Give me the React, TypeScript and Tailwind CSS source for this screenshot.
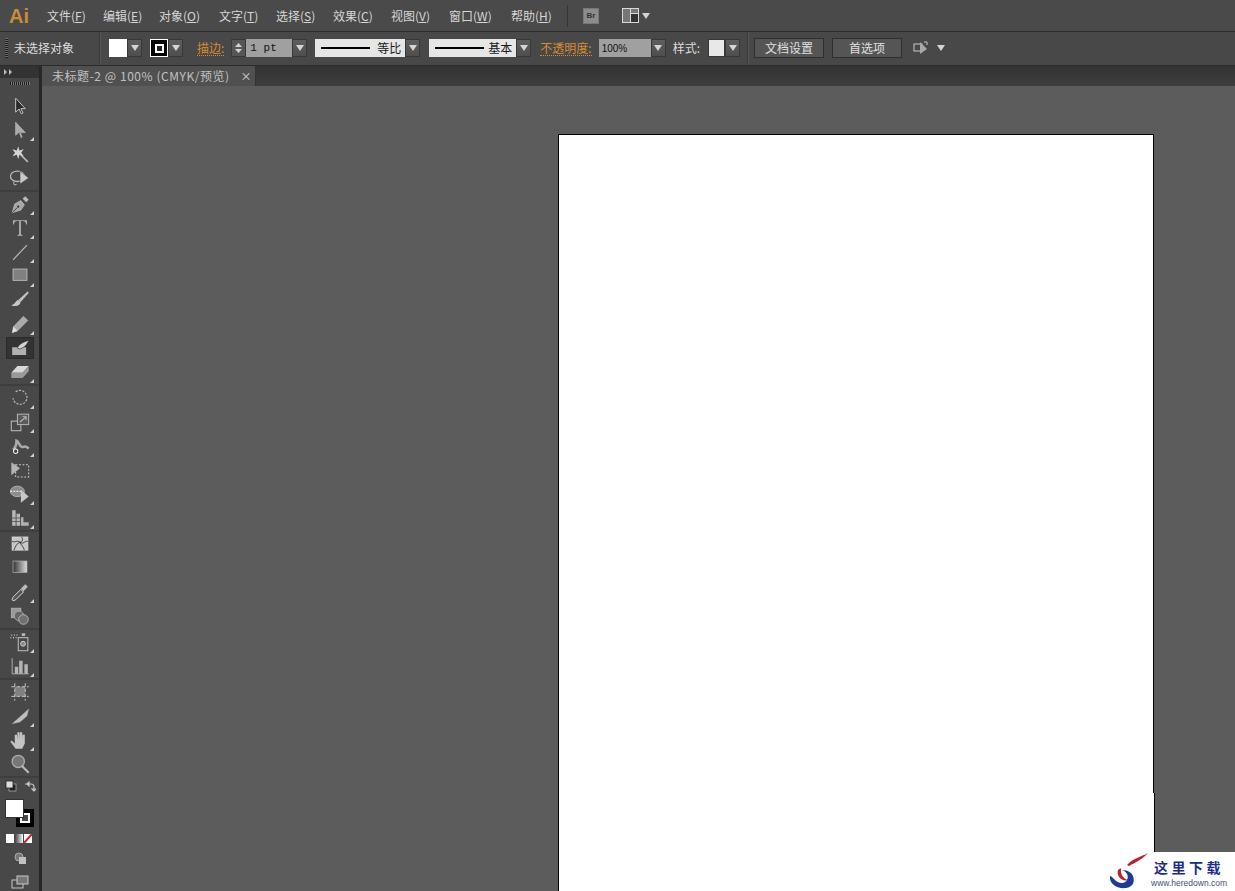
import React from "react";

const FONT = "font-['Noto_Sans_CJK_SC','Liberation_Sans',sans-serif]";

const menus = [
  { label: "文件", key: "F", w: "w-[56px]" },
  { label: "编辑", key: "E", w: "w-[56px]" },
  { label: "对象", key: "O", w: "w-[60px]" },
  { label: "文字", key: "T", w: "w-[57px]" },
  { label: "选择", key: "S", w: "w-[57px]" },
  { label: "效果", key: "C", w: "w-[58px]" },
  { label: "视图", key: "V", w: "w-[58px]" },
  { label: "窗口", key: "W", w: "w-[62px]" },
  { label: "帮助", key: "H", w: "w-[56px]" },
];

const Caret = () => (
  <svg width="8" height="6" viewBox="0 0 8 6">
    <path d="M0 0h8L4 6z" fill="#d4d4d4" />
  </svg>
);

const Drop = ({ className = "w-[15px]" }: { className?: string }) => (
  <div className={`flex h-[18px] items-center justify-center border border-[#383838] bg-gradient-to-b from-[#5e5e5e] to-[#4e4e4e] ${className}`}>
    <Caret />
  </div>
);

const Divider = ({ className = "" }: { className?: string }) => (
  <div className={`h-[32px] w-[2px] border-l border-[#3a3a3a] border-r-[#565656] border-r ${className}`} />
);

const LineBox = ({ label, width }: { label: string; width: string }) => (
  <div className={`flex h-[18px] items-center justify-between bg-[#e6e6e6] pl-[6px] pr-[4px] text-[12px] text-[#1a1a1a] ${width}`}>
    <div className="h-[2px] w-[49px] bg-black" />
    <span>{label}</span>
  </div>
);

// every tool icon sits in a 24 box, stroked the way the AI panel does
const s = { fill: "none", stroke: "#b9b9b9", strokeWidth: 1.2 };
const g = { fill: "#a8a8a8", stroke: "#c4c4c4", strokeWidth: 0.8 };

const toolIcons: Record<string, React.ReactNode> = {
  select: <path d="M7 3v16l4-3.500 2.500 5.500 2-1-2.500-5h5z" fill="#2a2a2a" stroke="#c8c8c8" strokeWidth="1.100" />,
  direct: (
    <g>
      <path d="M7 3v15l4-3.500 7 .5z" fill="#aaa" stroke="#bbb" strokeWidth="0.800" />
      <path d="M12 15l2 6" stroke="#aaa" strokeWidth="2" />
    </g>
  ),
  wand: (
    <g>
      <path d="M13 13l8 8" stroke="#bbb" strokeWidth="1.800" />
      <path d="M10 3l1.300 5 5-1.500-3 4 3 4-5-1.500-1.300 5-1.700-5-5 1.500 3-4-3-4 5 1.500z" fill="#d4d4d4" />
    </g>
  ),
  lasso: (
    <g>
      <ellipse cx="9" cy="10" rx="8" ry="6" fill="none" stroke="#b9b9b9" strokeWidth="1.500" />
      <path d="M5 16c-1 3 1 5 3 3" {...s} />
      <path d="M12 4v15l10-7z" fill="#c8c8c8" stroke="#3a3a3a" strokeWidth="0.600" />
    </g>
  ),
  pen: (
    <g>
      <path d="M3 22l3-10 7-4 4 5-4 6z" {...g} />
      <path d="M3 22l6-6" stroke="#333" strokeWidth="1" />
      <circle cx="10" cy="15" r="1.300" fill="#333" />
      <path d="M15 6l3-3 4 4-3 3z" fill="#bbb" />
    </g>
  ),
  type: <path d="M4 3h16v5h-1c0-2-1-4-4-4h-2v15c0 1 1 1 2 1v1H9v-1c1 0 2 0 2-1V4H9C6 4 5 6 5 8H4z" fill="#b4b4b4" />,
  line: <path d="M4 21L20 4" stroke="#bdbdbd" strokeWidth="1.300" />,
  rect: <rect x="4" y="4" width="16" height="13" fill="#808080" stroke="#bdbdbd" strokeWidth="1" />,
  brush: (
    <g>
      <path d="M21 2L10 12l2.500 2.500L22 4z" fill="#c0c0c0" />
      <path d="M10 12c-3 0-3 5-8 6 3 2 10 1 10.500-3.500z" fill="#c8c8c8" />
    </g>
  ),
  pencil: (
    <g>
      <path d="M3 22l1.500-7L16 3l5 5L9 20z" fill="#aaa" stroke="#bbb" strokeWidth="0.600" />
      <path d="M3 22l1.500-7L9 20z" fill="#e0e0e0" />
    </g>
  ),
  blob: (
    <g>
      <path d="M3 11h16v9H3z" fill="#b0b0b0" />
      <path d="M9 12c1-4 7-7 13-9-1 4-6 10-11 10z" fill="#d4d4d4" stroke="#333" strokeWidth="0.800" />
    </g>
  ),
  eraser: (
    <g>
      <path d="M9 5h13l-7 8H2z" fill="#d8d8d8" />
      <path d="M2 13h13v6H2zM15 13l7-8v6l-7 8z" fill="#999" />
    </g>
  ),
  rotate: <path d="M7 5a8 8 0 1 1-3 7" fill="none" stroke="#bbb" strokeWidth="1.300" strokeDasharray="2.500 1.500" />,
  scale: (
    <g>
      <rect x="2" y="11" width="11" height="11" {...s} />
      <rect x="9" y="3" width="13" height="12" fill="#5a5a5a" stroke="#b9b9b9" strokeWidth="1.100" />
      <path d="M12 12l7-6M15 6h4v4" {...s} />
    </g>
  ),
  warp: (
    <g>
      <path d="M4 16c3-2 4-6 4-10 3 1 3 6 6 7s4-3 8 2" fill="none" stroke="#aaa" strokeWidth="3" />
      <circle cx="7" cy="18" r="2.500" fill="#444" stroke="#eee" strokeWidth="1.200" />
    </g>
  ),
  free: (
    <g>
      <rect x="7" y="6" width="15" height="14" fill="none" stroke="#d0d0d0" strokeWidth="1.200" strokeDasharray="2 2" />
      <path d="M2 3v15l10-8z" fill="#b4b4b4" />
    </g>
  ),
  shape: (
    <g>
      <ellipse cx="9" cy="9" rx="8" ry="6" fill="#8c8c8c" stroke="#bbb" strokeWidth="1" />
      <path d="M1 9h14" stroke="#eee" strokeWidth="1.200" strokeDasharray="2 1.500" />
      <path d="M13 7v15l9-7z" fill="#c8c8c8" />
    </g>
  ),
  graph3d: (
    <g>
      <path d="M3 3h4v18H3zM8 7h4v14H8z" fill="#b8b8b8" />
      <path d="M13 11h3v6h6v4h-9z" fill="#b0b0b0" />
      <path d="M3 12h9M3 16h9" stroke="#555" />
    </g>
  ),
  mesh: (
    <g>
      <rect x="3" y="4" width="18" height="15" fill="#c8c8c8" stroke="#ddd" strokeWidth="1" />
      <path d="M3 9c4 2 5-2 9 1s5-2 9-1M5 19c2-4 3-8 7-9s3-4 2-6M12 10c1 3 4 5 5 9" fill="none" stroke="#333" strokeWidth="1" />
    </g>
  ),
  gradient: (
    <g>
      <defs>
        <linearGradient id="tool-grad">
          <stop offset="0" stopColor="#333" />
          <stop offset="1" stopColor="#dcdcdc" />
        </linearGradient>
      </defs>
      <rect x="4" y="4" width="16" height="13" fill="url(#tool-grad)" stroke="#b4b4b4" strokeWidth="0.800" />
    </g>
  ),
  eyedrop: (
    <g>
      <path d="M4 22l-1-1 1-3 9-9 3 3-9 9z" fill="#555" stroke="#e0e0e0" strokeWidth="1.100" />
      <path d="M13 8l5-5 3 3-5 5z" fill="#bbb" />
    </g>
  ),
  blend: (
    <g>
      <rect x="2" y="3" width="11" height="11" fill="#999" stroke="#bbb" strokeWidth="0.800" />
      <circle cx="11" cy="12" r="5.500" fill="#666" stroke="#aaa" />
      <circle cx="16" cy="16" r="5.500" fill="#707070" stroke="#c0c0c0" />
    </g>
  ),
  symbol: (
    <g>
      <path d="M2 4h1M5 4h1M8 4h1M1 7h1M4 7h1M7 7h1" stroke="#ddd" strokeWidth="1.500" />
      <rect x="14" y="2" width="4" height="3" fill="#bbb" />
      <rect x="10" y="7" width="11" height="15" fill="none" stroke="#bbb" strokeWidth="1.200" />
      <circle cx="15.500" cy="14" r="2.800" fill="#888" stroke="#ddd" />
    </g>
  ),
  graph: (
    <g>
      <path d="M3 3v18h19" fill="none" stroke="#bbb" strokeWidth="1" />
      <path d="M6 13h4v8H6zM11 6h4v15h-4zM17 10h4v11h-4z" fill="#b4b4b4" />
    </g>
  ),
  artboard: (
    <g>
      <rect x="6" y="6" width="12" height="11" fill="#808080" />
      <path d="M2 6h20M2 17h20M6 2v20M18 2v20" stroke="#d4d4d4" strokeWidth="1" strokeDasharray="4 2" />
    </g>
  ),
  slice: <path d="M3 21L22 4l-2 8-8 7z" fill="#c0c0c0" stroke="#aaa" strokeWidth="0.500" />,
  hand: <path d="M7 22l-6-8 1.500-1.500L6 16V6l2.500 0 .5 6V3h2.500l.5 9V3h2.500l.5 9V6h2.500v10l-3 6z" fill="#c4c4c4" />,
  zoom: (
    <g>
      <circle cx="10" cy="9" r="7" fill="#777" stroke="#aaa" strokeWidth="1.500" />
      <path d="M14 14l8 8" stroke="#bbb" strokeWidth="2.400" />
    </g>
  ),
};

const toolGroups: { name: string; corner?: boolean; active?: boolean }[][] = [
  [{ name: "select" }, { name: "direct", corner: true }, { name: "wand" }, { name: "lasso" }],
  [
    { name: "pen", corner: true },
    { name: "type", corner: true },
    { name: "line", corner: true },
    { name: "rect", corner: true },
    { name: "brush" },
    { name: "pencil", corner: true },
    { name: "blob", active: true },
    { name: "eraser", corner: true },
  ],
  [
    { name: "rotate", corner: true },
    { name: "scale", corner: true },
    { name: "warp", corner: true },
    { name: "free" },
    { name: "shape", corner: true },
    { name: "graph3d", corner: true },
  ],
  [{ name: "mesh" }, { name: "gradient" }, { name: "eyedrop", corner: true }, { name: "blend" }],
  [{ name: "symbol", corner: true }, { name: "graph", corner: true }],
  [{ name: "artboard" }, { name: "slice", corner: true }, { name: "hand", corner: true }, { name: "zoom" }],
];

const Tool = ({ name, corner, active }: { name: string; corner?: boolean; active?: boolean }) => (
  <div className="relative flex h-[24px] items-center justify-center pl-[1px]">
    {active && <div className="absolute left-[6px] top-[1px] h-[22px] w-[28px] bg-[#333] shadow-[inset_0_0_0_1px_#2b2b2b]" />}
    <svg width="20" height="20" viewBox="0 0 24 24" className="relative scale-[0.95]" style={{ width: 22, height: 22 }}>
      {toolIcons[name]}
    </svg>
    {corner && (
      <svg width="4" height="4" viewBox="0 0 4 4" className="absolute bottom-[1px] left-[30px]">
        <path d="M4 0v4H0z" fill="#d0d0d0" />
      </svg>
    )}
  </div>
);

const Toolbar = () => (
  <aside className="flex w-[42px] shrink-0 flex-col overflow-hidden border-r-[3px] border-[#272727] bg-[#484848]">
    <div className="flex h-[12px] items-center bg-[#333] pl-[4px]">
      <svg width="9" height="6" viewBox="0 0 9 6">
        <path d="M0 0l3 3-3 3zM5 0l3 3-3 3z" fill="#bdbdbd" />
      </svg>
    </div>
    <div className="flex h-[16px] justify-center pl-[1px] pt-[4px]">
      <div className="h-[3px] w-[20px] bg-[repeating-linear-gradient(90deg,#1e1e1e_0,#1e1e1e_1px,#777_1px,#777_2px)]" />
    </div>
    {toolGroups.map((group, i) => (
      <div key={i} className="border-b-2 border-[#3e3e3e]">
        {group.map((t) => (
          <Tool key={t.name} {...t} />
        ))}
      </div>
    ))}
    <div className="flex h-[16px] items-center justify-between pl-[5px] pr-[3px]">
      <svg width="12" height="12" viewBox="0 0 12 12">
        <rect x="4" y="4" width="7" height="7" fill="#222" stroke="#aaa" strokeWidth="0.800" />
        <rect x="1" y="1" width="7" height="7" fill="#ddd" stroke="#222" strokeWidth="0.800" />
      </svg>
      <svg width="12" height="12" viewBox="0 0 12 12">
        <path d="M1 4h2l2-2v4L3 4M3 4h4c2 0 3 1 3 3M10 11l-2-2h4zM10 7v2" fill="none" stroke="#c8c8c8" strokeWidth="1.100" />
      </svg>
    </div>
    <div className="relative h-[40px]">
      <div className="absolute left-[16px] top-[15px] flex h-[18px] w-[18px] items-center justify-center border-[3px] border-black bg-black">
        <div className="h-[10px] w-[10px] border-2 border-white bg-[#484848]" />
      </div>
      <div className="absolute left-[5px] top-[5px] h-[19px] w-[19px] border border-[#333] bg-white" />
    </div>
    <div className="flex h-[12px] gap-[1px] pl-[6px]">
      <div className="h-[9px] w-[8px] bg-white" />
      <div className="h-[9px] w-[8px] bg-gradient-to-r from-[#444] to-white" />
      <svg width="8" height="9" viewBox="0 0 8 9">
        <rect width="8" height="9" fill="#fff" />
        <path d="M0 9L8 0" stroke="#c2272d" strokeWidth="2" />
      </svg>
    </div>
    <div className="flex h-[24px] items-center justify-center">
      <svg width="12" height="12" viewBox="0 0 12 12">
        <circle cx="5" cy="5" r="4" fill="#777" stroke="#aaa" />
        <rect x="5" y="5" width="7" height="7" fill="#c0c0c0" />
      </svg>
    </div>
    <div className="flex justify-center pt-[5px]">
      <svg width="18" height="14" viewBox="0 0 18 14">
        <rect x="1" y="5" width="11" height="8" fill="none" stroke="#c8c8c8" />
        <rect x="6" y="1" width="11" height="8" fill="#777" stroke="#c8c8c8" />
      </svg>
    </div>
  </aside>
);

const MenuBar = () => (
  <div className="flex h-[32px] items-center border-b border-[#2d2d2d] bg-[#4a4a4a] pl-[9px]">
    <span className="w-[38px] font-['Liberation_Sans',sans-serif] text-[20px] font-bold leading-none text-[#c98c3a]">Ai</span>
    {menus.map((m) => (
      <span key={m.key} className={`text-[12px] text-[#d6d6d6] ${m.w}`}>
        {m.label}(<span className="underline">{m.key}</span>)
      </span>
    ))}
    <div className="h-[22px] w-px bg-[#363636]" />
    <div className="ml-[15px] flex h-[16px] w-[16px] items-center justify-center border border-[#777] bg-[#8c8c8c] font-['Liberation_Sans',sans-serif] text-[8px] font-bold text-[#333]">
      Br
    </div>
    <div className="ml-[23px] flex h-[15px] w-[17px] border border-[#d8d8d8] bg-[#333]">
      <div className="w-[8px] border-r border-[#d8d8d8] bg-[#777]" />
      <div className="flex flex-1 flex-col">
        <div className="h-[5px] border-b border-[#d8d8d8] bg-[#777]" />
      </div>
    </div>
    <div className="ml-[3px]">
      <Caret />
    </div>
  </div>
);

const ControlBar = () => (
  <div className="flex h-[34px] items-center border-b border-[#2a2a2a] bg-[#484848] pb-[1px] pl-[5px] text-[12px] text-[#dcdcdc]">
    <div className="h-[20px] w-[3px] bg-[repeating-linear-gradient(0deg,#1e1e1e_0,#1e1e1e_1px,#6a6a6a_1px,#6a6a6a_2px)]" />
    <span className="ml-[6px] w-[85px]">未选择对象</span>
    <Divider />
    <div className="ml-[8px] h-[18px] w-[18px] bg-white" />
    <Drop />
    <div className="ml-[8px] flex h-[18px] w-[18px] items-center justify-center border border-white bg-black">
      <div className="h-[9px] w-[9px] border-2 border-white bg-[#222]" />
    </div>
    <Drop />
    <span className="ml-[14px] border-b border-dotted border-[#d88a33] leading-[15px] text-[#d88a33]">描边:</span>
    <div className="ml-[7px] flex h-[18px] w-[15px] flex-col items-center justify-center gap-[2px] border border-[#383838] bg-[#565656]">
      <svg width="7" height="4" viewBox="0 0 7 4"><path d="M0 4h7L3.500 0z" fill="#d4d4d4" /></svg>
      <svg width="7" height="4" viewBox="0 0 7 4"><path d="M0 0h7L3.500 4z" fill="#d4d4d4" /></svg>
    </div>
    <div className="flex h-[18px] w-[46px] items-center bg-[#a0a0a0] pl-[4px] font-['Liberation_Mono',monospace] text-[11px] text-[#111]">1 pt</div>
    <Drop />
    <div className="ml-[8px]">
      <LineBox label="等比" width="w-[90px]" />
    </div>
    <Drop />
    <div className="ml-[9px]">
      <LineBox label="基本" width="w-[87px]" />
    </div>
    <Drop />
    <span className="ml-[9px] border-b border-dotted border-[#d88a33] leading-[15px] text-[#d88a33]">不透明度:</span>
    <div className="ml-[7px] flex h-[18px] w-[52px] items-center bg-[#a0a0a0] pl-[3px] font-['Liberation_Sans',sans-serif] text-[10px] text-[#111]">100%</div>
    <Drop />
    <span className="ml-[7px]">样式:</span>
    <div className="ml-[8px] h-[18px] w-[17px] border border-[#383838] bg-[#e8e8e8]" />
    <Drop />
    <Divider className="ml-[7px]" />
    <button className="ml-[5px] h-[20px] w-[70px] border border-[#2f2f2f] bg-[#555] text-[12px] text-[#e0e0e0]">文档设置</button>
    <button className="ml-[8px] h-[20px] w-[70px] border border-[#2f2f2f] bg-[#555] text-[12px] text-[#e0e0e0]">首选项</button>
    <svg width="16" height="14" viewBox="0 0 16 14" className="ml-[11px]">
      <rect x="1" y="3" width="8" height="7" fill="none" stroke="#c8c8c8" />
      <path d="M7 1v12l7-5z" fill="#a8a8a8" />
      <path d="M11 1h3v3" fill="none" stroke="#c8c8c8" />
    </svg>
    <div className="ml-[8px]">
      <Caret />
    </div>
  </div>
);

const Watermark = () => (
  <div className="absolute bottom-0 right-0 flex h-[39px] w-[126px] items-center bg-white">
    <svg width="44" height="39" viewBox="0 0 44 39" className="shrink-0">
      <path d="M1 24c-1 8 7 13 16 12 7-1 9-6 7-12-1-3-5-6-11-6 5 2 7 6 5 10-2 4-9 4-13-1-2-2-3-3-4-3z" fill="#1f3a93" />
      <path d="M9 18c-2 6 4 12 10 10-4-1-8-5-7-12z" fill="#b52231" />
      <path d="M18 13C24 6 32 5 39 1 34 7 27 10 20 14z" fill="#b52231" />
    </svg>
    <div className="flex flex-col items-start">
      <span className="pl-[1px] text-[14px] font-bold leading-[22px] tracking-[3.500px] text-[#1d2c86]">这里下载</span>
      <span className="-ml-[2px] font-['Liberation_Sans',sans-serif] text-[8.500px] leading-[10px] text-[#42507c]">www.heredown.com</span>
    </div>
  </div>
);

const App: React.FC = () => {
  return (
    <div className={`relative flex h-[891px] w-[1235px] flex-col overflow-hidden bg-[#5c5c5c] ${FONT}`}>
      <MenuBar />
      <ControlBar />
      <div className="flex min-h-0 flex-1">
        <Toolbar />
        <main className="flex min-w-0 flex-1 flex-col">
          <div className="flex h-[20px] bg-gradient-to-b from-[#333] to-[#3d3d3d]">
            <div className="flex w-[214px] items-center justify-between border-r border-[#333] bg-[#505050] pl-[10px] pr-[3px] text-[12px] tracking-[0.550px] text-[#c0c0c0]">
              <span className="whitespace-nowrap">未标题-2 @ 100% (CMYK/预览)</span>
              <span className="text-[11px] leading-none text-[#ddd]">×</span>
            </div>
          </div>
          <div className="flex flex-1 flex-col bg-[#5c5c5c] pl-[516px] pt-[48px]">
            <div className="h-[659px] w-[596px] border-x border-t border-black bg-white" />
            <div className="w-[597px] flex-1 border-x border-black bg-white" />
          </div>
        </main>
      </div>
      <Watermark />
    </div>
  );
};

export default App;
